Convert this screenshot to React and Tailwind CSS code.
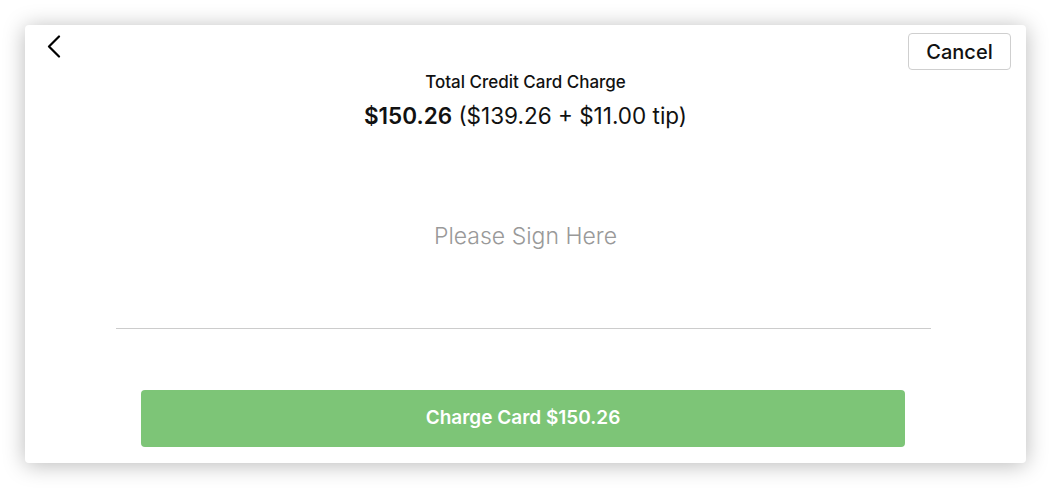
export default function App() {
  return (
    <div
      className="w-full h-[489px] bg-white p-[25px]"
      style={{ fontFamily: "Inter, 'Noto Sans', sans-serif" }}
    >
      {/* CARD */}
      <div className="relative flex h-[438px] w-[1001px] flex-col rounded-[4px] bg-white shadow-[0_2px_22px_rgba(0,0,0,0.28)]">
        {/* BACK */}
        <button className="absolute left-[21px] top-[10px] text-black">
          <svg width="15" height="23" viewBox="0 0 15 23" fill="none">
            <path
              d="M13 1.5 L3 11.5 L13 21.5"
              stroke="currentColor"
              strokeWidth="2.2"
              strokeLinecap="round"
              strokeLinejoin="round"
            />
          </svg>
        </button>

        {/* CANCEL */}
        <button className="absolute right-[15px] top-[8px] flex h-[37px] w-[103px] items-center justify-center rounded-[4px] border border-[#cfcfcf] bg-white text-[20px] font-medium text-[#111]">
          Cancel
        </button>

        {/* HEADER */}
        <div className="mt-[46px] flex flex-col items-center">
          <p className="text-[17px] font-medium leading-[22px] text-[#111]">
            Total Credit Card Charge
          </p>
          <p className="mt-[8px] text-[22.5px] leading-[30px] text-[#111]">
            <span className="font-semibold">$150.26</span> ($139.26 + $11.00 tip)
          </p>
        </div>

        {/* SIGNATURE */}
        <div className="mt-[91px] flex justify-center">
          <p className="text-[23px] font-light leading-[28px] text-[#999]">
            Please Sign Here
          </p>
        </div>

        <div className="ml-[91px] mt-[78px] mr-[95px] h-[1px] bg-[#cccccc]" />

        {/* CHARGE */}
        <div className="mt-[61px] pl-[116px]">
          <button className="flex h-[57px] w-[764px] items-center justify-center rounded-[4px] bg-[#7dc577] text-[19px] font-semibold text-white">
            Charge Card $150.26
          </button>
        </div>
      </div>
    </div>
  );
}
